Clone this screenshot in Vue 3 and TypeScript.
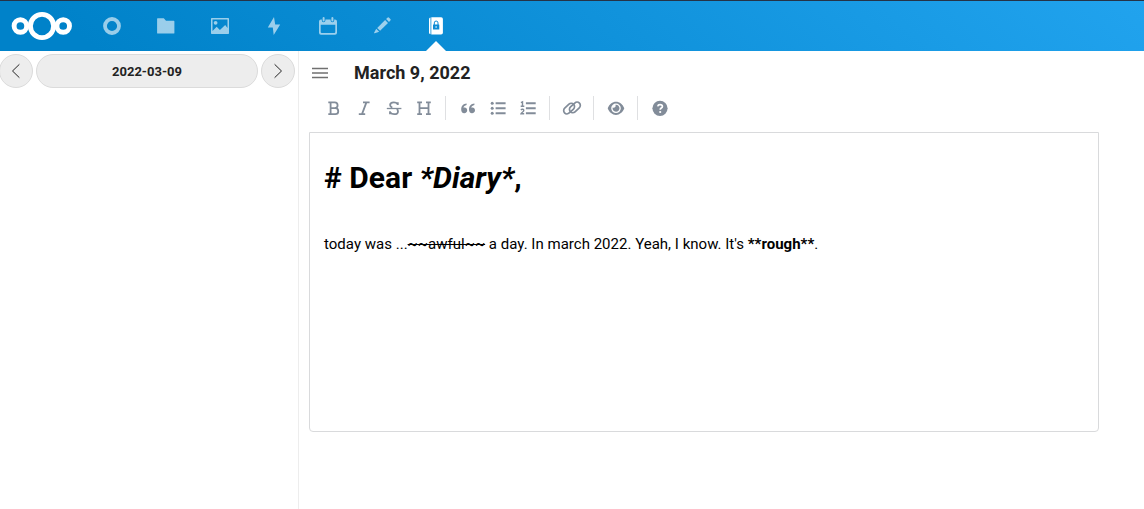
<script setup lang="ts">
import { ref } from 'vue'

const day = ref('2022-03-09')
const title = ref('March 9, 2022')
</script>

<template>
  <div class="page">
    <header class="header">
      <svg class="logo" viewBox="0 0 62 30" fill="none" stroke="#fff">
        <circle cx="31" cy="15" r="11.6" stroke-width="4.9" />
        <circle cx="9.4" cy="15" r="6.3" stroke-width="4.9" />
        <circle cx="52.2" cy="15" r="6.3" stroke-width="4.9" />
      </svg>
      <nav class="apps">
        <a class="app"><svg viewBox="0 0 20 20"><circle cx="10" cy="10" r="7" fill="none" stroke="#fff" stroke-width="3.8" /></svg></a>
        <a class="app"><svg viewBox="0 0 20 20"><path d="M1.6 2.3h6.2l2.2 2.5h7.7q.7 0 .7.7v11.4q0 .7-.7.7H1.8q-.7 0-.7-.7V2.8q0-.5.5-.5Z" fill="#fff" /></svg></a>
        <a class="app"><svg viewBox="0 0 20 20"><path d="M1.7 2h16.6q.7 0 .7.7v14.6q0 .7-.7.7H1.7q-.7 0-.7-.7V2.7q0-.7.7-.7Zm.8 1.5V15l4.2-4.2 3.2 3.2L15.2 9l2.3 3V3.5Z" fill="#fff" fill-rule="evenodd" /><circle cx="5.6" cy="6.8" r="1.9" fill="#fff" /></svg></a>
        <a class="app"><svg viewBox="0 0 20 20"><path d="M10 1 3.8 11.5h5L9.7 19 16.2 8.5h-5Z" fill="#fff" /></svg></a>
        <a class="app"><svg viewBox="0 0 20 20" fill="#fff"><path d="M3 3.4h.8v1.1a1.8 1.8 0 0 0 3.6 0V3.4h5.2v1.1a1.8 1.8 0 0 0 3.6 0V3.4h.8q2 0 2 2v11.4q0 2-2 2H3q-2 0-2-2V5.4q0-2 2-2Zm-.3 5.3v7.2q0 1.1 1.1 1.1h12.4q1.1 0 1.1-1.1V8.7Z" fill-rule="evenodd" /><rect x="4.6" y="1" width="2" height="4.6" rx="1" /><rect x="13.4" y="1" width="2" height="4.6" rx="1" /></svg></a>
        <a class="app"><svg viewBox="0 0 20 20" fill="#fff"><path d="m14.1 3 1.3-1.3q.9-.8 1.7 0l1.2 1.2q.9.9 0 1.7L17 5.9Z" /><path d="m13.1 4 2.9 2.9-7.9 7.9-2.9-2.9Z" /><path d="m4.2 12.8 3 3-4.4 1.4q-.9.2-.6-.6Z" /></svg></a>
        <a class="app active">
          <svg viewBox="0 0 20 20"><path d="M3 3.2q0-1.8 1.5-1.8v16.9Q3 18.3 3 16.6Z" fill="#fff" /><path d="M5.3 1.3h9.8q1.8 0 1.8 1.8v13.6q0 1.8-1.8 1.8H5.3Z" fill="#fff" /><rect x="7" y="8.4" width="6.3" height="5.2" rx=".4" fill="#0b8bd5" /><path d="M8.3 9V6.9a1.85 1.85 0 0 1 3.7 0V9" fill="none" stroke="#0b8bd5" stroke-width="1" /><circle cx="10.1" cy="11" r=".8" fill="#fff" /></svg>
        </a>
      </nav>
    </header>

    <div class="body">
      <aside class="sidebar">
        <button class="round prev"><svg viewBox="0 0 16 16"><path d="M11.4 1.3 4.5 8l6.9 6.7" /></svg></button>
        <button class="date">{{ day }}</button>
        <button class="round next"><svg viewBox="0 0 16 16"><path d="M4.6 1.3 11.5 8l-6.9 6.7" /></svg></button>
      </aside>

      <main class="content">
        <div class="title-row">
          <svg class="menu" viewBox="0 0 16 12"><path d="M0 1.5h16M0 6h16M0 10.5h16" /></svg>
          <h2>{{ title }}</h2>
        </div>

        <div class="toolbar">
          <button title="Bold"><svg viewBox="0 0 20 20" class="line"><path d="M4.3 4.4h6.4a2.9 2.9 0 0 1 0 5.8H6.6M4.3 16.1h7a2.95 2.95 0 0 0 0-5.9h-.8M6.6 4.4v11.7" /></svg></button>
          <button title="Italic"><svg viewBox="0 0 20 20" class="line"><path d="M9 4.4h6.6M4.8 16.1h6.4M12.4 4.4 8 16.1" /></svg></button>
          <button title="Strikethrough"><svg viewBox="0 0 20 20" class="line"><path d="M13.8 7V4.3M13.7 6.2C12.8 5 11.5 4.4 9.8 4.4c-2.2 0-3.7 1-3.7 2.7 0 1.3.9 2 2.2 2.5M6 16.3v-3M6.1 14.2c.9 1.3 2.3 2 4.1 2 2.2 0 3.8-1.1 3.8-2.8 0-1-.5-1.8-1.2-2.3" /><path d="M2.8 10.5h14.6" stroke-width="1.3" /></svg></button>
          <button title="Heading"><svg viewBox="0 0 20 20" class="line"><path d="M3.2 4.4H8M12 4.4h4.8M3.2 16.1H8M12 16.1h4.8M5.5 4.4v11.7M14.5 4.4v11.7M5.5 10.2h9" /></svg></button>
          <i class="separator"></i>
          <button title="Quote"><svg viewBox="0 0 20 20"><path d="M8.6 5.6C5.3 5.7 3.2 8 3.2 11.5c0 2.3 1.1 3.7 3 3.7 1.8 0 3-1.2 3-2.9 0-1.6-1.1-2.8-2.7-2.8-.5 0-.8.1-1.1.2.3-1.5 1.4-2.4 3.2-2.8Z" /><path d="M16.4 5.6C13.1 5.7 11 8 11 11.5c0 2.3 1.1 3.7 3 3.7 1.8 0 3-1.2 3-2.9 0-1.6-1.1-2.8-2.7-2.8-.5 0-.8.1-1.1.2.3-1.5 1.4-2.4 3.2-2.8Z" /></svg></button>
          <button title="Generic List"><svg viewBox="0 0 20 20"><circle cx="4.2" cy="5.3" r="1.5" /><circle cx="4.2" cy="10.3" r="1.5" /><circle cx="4.2" cy="15.3" r="1.5" /><path d="M7.6 4.3h10v1.9h-10ZM7.6 9.3h10v1.9h-10ZM7.6 14.3h10v1.9h-10Z" /></svg></button>
          <button title="Numbered List"><svg viewBox="0 0 20 20"><path d="M7.9 4.3h9.8v1.9H7.9ZM7.9 9.3h9.8v1.9H7.9ZM7.9 14.3h9.8v1.9H7.9Z" /><path d="M2.9 4.6 4.5 3.9v4M2.7 8.2h3.6M2.9 12c1-1.2 2.9-.8 2.9.4 0 1.3-2.4 2.1-2.8 3.4h3.2" fill="none" stroke="#828c99" stroke-width="1.4" /></svg></button>
          <i class="separator"></i>
          <button title="Create Link"><svg viewBox="0 0 20 20" class="link"><rect x="-6.2" y="-3.3" width="12.4" height="6.6" rx="3.3" transform="translate(7.1 10.6) rotate(-43)" /><rect x="-6.2" y="-3.3" width="12.4" height="6.6" rx="3.3" transform="translate(12.9 9.4) rotate(-43)" /></svg></button>
          <i class="separator"></i>
          <button title="Toggle Preview"><svg viewBox="0 0 20 20"><path fill-rule="evenodd" d="M1.7 10.3C3.2 6.2 6.4 3.7 10 3.7s6.8 2.5 8.3 6.6c-1.5 4.1-4.7 6.6-8.3 6.6s-6.8-2.5-8.3-6.6ZM10 5.5a4.8 4.8 0 1 0 0 9.6 4.8 4.8 0 0 0 0-9.6Z" /><path d="M9.4 6.8c.5.9.3 1.8-.4 2.4-.6.5-1.4.6-2.3.3-.5 2 1 4.2 3.3 4.2 1.9 0 3.5-1.5 3.5-3.4 0-2.3-2-3.9-4.1-3.5Z" /></svg></button>
          <i class="separator"></i>
          <button title="Markdown Guide"><svg viewBox="0 0 20 20"><circle cx="10" cy="10.3" r="7.6" /><path d="M7.7 8.4C8 7.1 8.8 6.6 10 6.6c1.4 0 2.4.8 2.4 1.9 0 1.6-2.2 1.5-2.2 3.2" fill="none" stroke="#fff" stroke-width="1.7" /><circle cx="10.2" cy="14" r="1.1" fill="#fff" /></svg></button>
        </div>

        <article class="editor">
          <h1># Dear <em>*Diary*</em>,</h1>
          <p>today was ...<s>~~awful~~</s> a day. In march 2022. Yeah, I know. It's <strong>**rough**</strong>.</p>
        </article>
      </main>
    </div>
  </div>
</template>

<style>
body {
  margin: 0;
  background: #fff;
}
</style>

<style scoped>
.page {
  height: 509px;
  display: flex;
  flex-direction: column;
  overflow: hidden;
  font-family: Roboto, "Liberation Sans", sans-serif;
  color: #222;
}
.header {
  box-sizing: border-box;
  flex: none;
  height: 51px;
  border-top: 1px solid #253347;
  background: linear-gradient(40deg, #0082c9 0%, #0082c9 8%, #21a3ee 100%);
  display: flex;
  align-items: stretch;
  padding-left: 11px;
}
.logo {
  width: 62px;
  height: 30px;
  margin-top: 10px;
}
.apps {
  display: flex;
  margin-left: 12px;
}
.app {
  position: relative;
  width: 54px;
  display: flex;
  justify-content: center;
  align-items: center;
}
.app svg {
  width: 20px;
  height: 20px;
  opacity: 0.6;
}
.app.active svg {
  opacity: 1;
}
.app.active::after {
  content: "";
  position: absolute;
  bottom: 0;
  left: 17px;
  border: 10px solid transparent;
  border-top: 0;
  border-bottom-color: #fff;
}
.body {
  flex: 1;
  display: flex;
}
.sidebar {
  box-sizing: border-box;
  width: 299px;
  border-right: 1px solid #ededed;
  padding-top: 3px;
  display: flex;
  align-items: flex-start;
  gap: 3px;
}
.sidebar button {
  box-sizing: border-box;
  height: 34px;
  padding: 0;
  border: 1px solid #dbdbdb;
  border-radius: 17px;
  background: #ededed;
  color: #222;
  display: flex;
  align-items: center;
  justify-content: center;
}
.sidebar .round {
  flex: none;
  width: 34px;
}
.sidebar .prev {
  margin-left: -1px;
}
.sidebar .date {
  flex: none;
  width: 222px;
  font: bold 13px Roboto, sans-serif;
}
.round svg {
  width: 16px;
  height: 16px;
  fill: none;
  stroke: #222;
  stroke-width: 1;
}
.content {
  flex: 1;
  padding: 0 45px 0 10px;
}
.title-row {
  height: 44px;
  display: flex;
  align-items: center;
  padding-left: 3px;
}
.menu {
  width: 16px;
  height: 12px;
  stroke: #707070;
  stroke-width: 1.5;
}
h2 {
  margin: 0 0 0 26px;
  font-size: 18px;
  line-height: 24px;
  font-weight: 700;
  letter-spacing: 0.02px;
}
.toolbar {
  height: 37px;
  display: flex;
  padding-left: 10px;
}
.toolbar button {
  width: 30px;
  height: 26px;
  padding: 0;
  border: 0;
  background: none;
  display: flex;
  align-items: center;
  justify-content: center;
}
.toolbar svg {
  width: 20px;
  height: 20px;
  fill: #828c99;
}
.toolbar .line,
.toolbar .link {
  fill: none;
  stroke: #828c99;
  stroke-width: 1.8;
}
.toolbar .link {
  stroke-width: 1.7;
}
.separator {
  width: 1px;
  height: 24px;
  margin: 1px 7px 0 6px;
  background: #dfe0e2;
}
.editor {
  box-sizing: border-box;
  height: 300px;
  border: 1px solid #d9dadc;
  border-radius: 0 0 4px 4px;
  padding: 0 14px;
  color: #000;
}
h1 {
  margin: 25px 0 0;
  font-size: 30px;
  line-height: 40px;
  font-weight: 700;
  letter-spacing: 0.04px;
}
p {
  margin: 34px 0 0;
  font-size: 15px;
  line-height: 24px;
  letter-spacing: 0.015px;
}
</style>
